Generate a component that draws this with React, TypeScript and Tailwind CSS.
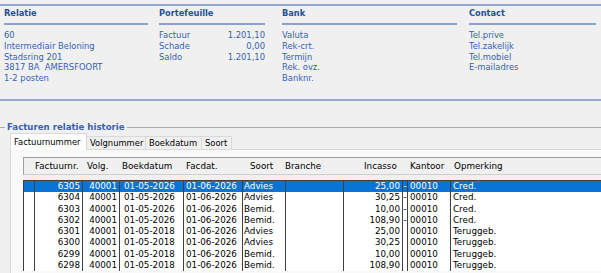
import React from 'react';

interface Invoice {
  nr: string;
  volg: string;
  boek: string;
  fac: string;
  soort: string;
  incasso: string;
  dash: string;
  kantoor: string;
  opm: string;
}

const rows: Invoice[] = [
  { nr: '6305', volg: '40001', boek: '01-05-2026', fac: '01-06-2026', soort: 'Advies', incasso: '25,00', dash: '-', kantoor: '00010', opm: 'Cred.' },
  { nr: '6304', volg: '40001', boek: '01-05-2026', fac: '01-06-2026', soort: 'Advies', incasso: '30,25', dash: '-', kantoor: '00010', opm: 'Cred.' },
  { nr: '6303', volg: '40001', boek: '01-05-2026', fac: '01-06-2026', soort: 'Bemid.', incasso: '10,00', dash: '-', kantoor: '00010', opm: 'Cred.' },
  { nr: '6302', volg: '40001', boek: '01-05-2026', fac: '01-06-2026', soort: 'Bemid.', incasso: '108,90', dash: '-', kantoor: '00010', opm: 'Cred.' },
  { nr: '6301', volg: '40001', boek: '01-05-2018', fac: '01-06-2026', soort: 'Advies', incasso: '25,00', dash: '', kantoor: '00010', opm: 'Teruggeb.' },
  { nr: '6300', volg: '40001', boek: '01-05-2018', fac: '01-06-2026', soort: 'Advies', incasso: '30,25', dash: '', kantoor: '00010', opm: 'Teruggeb.' },
  { nr: '6299', volg: '40001', boek: '01-05-2018', fac: '01-06-2026', soort: 'Bemid.', incasso: '10,00', dash: '', kantoor: '00010', opm: 'Teruggeb.' },
  { nr: '6298', volg: '40001', boek: '01-05-2018', fac: '01-06-2026', soort: 'Bemid.', incasso: '108,90', dash: '', kantoor: '00010', opm: 'Teruggeb.' },
];

const InfoColumn: React.FC<{ title: string; width: string; children: React.ReactNode }> = ({ title, width, children }) => (
  <div className={`${width} shrink-0`}>
    <div className="h-[11px] leading-[11px] text-[8.25px] font-bold text-[#24509c]">{title}</div>
    <div className="mt-[4px] h-[2px] bg-[#8ba1cb]" />
    <div className="mt-[5px] text-[8.4px] leading-[10.75px] text-[#3563b3]">{children}</div>
  </div>
);

const tabs = ['Factuurnummer', 'Volgnummer', 'Boekdatum', 'Soort'];

export default function App() {
  return (
    <div className="w-[601px] h-[273px] overflow-hidden bg-[#f0f0f0] font-['DejaVu_Sans',sans-serif]">
      {/* Relatie info */}
      <div className="pt-[4px]">
        <div className="h-[2px] bg-[#94a9cf]" />
        <div className="flex h-[93px] pt-[2px] pl-[4px]">
          <InfoColumn title="Relatie" width="w-[144px]">
            <div>60</div>
            <div>Intermediair Beloning</div>
            <div>Stadsring 201</div>
            <div className="whitespace-pre">3817 BA  AMERSFOORT</div>
            <div>1-2 posten</div>
          </InfoColumn>
          <div className="ml-[11px]">
            <InfoColumn title="Portefeuille" width="w-[106px]">
              {[
                ['Factuur', '1.201,10'],
                ['Schade', '0,00'],
                ['Saldo', '1.201,10'],
              ].map(([k, v]) => (
                <div key={k} className="flex justify-between">
                  <span>{k}</span>
                  <span>{v}</span>
                </div>
              ))}
            </InfoColumn>
          </div>
          <div className="ml-[17px]">
            <InfoColumn title="Bank" width="w-[175px]">
              <div>Valuta</div>
              <div>Rek-crt.</div>
              <div>Termijn</div>
              <div>Rek. ovz.</div>
              <div>Banknr.</div>
            </InfoColumn>
          </div>
          <div className="ml-[12px]">
            <InfoColumn title="Contact" width="w-[127px]">
              <div>Tel.prive</div>
              <div>Tel.zakelijk</div>
              <div>Tel.mobiel</div>
              <div>E-mailadres</div>
            </InfoColumn>
          </div>
        </div>
        <div className="h-[2px] bg-[#94a9cf]" />
      </div>

      {/* Group box */}
      <div className="mt-[21px] flex items-center h-[11px]">
        <div className="w-[5px] h-px bg-[#a9a9a9]" />
        <span className="px-[2px] text-[8.6px] leading-[11px] font-bold text-[#3a62ad]">Facturen relatie historie</span>
        <div className="flex-1 h-px bg-[#a9a9a9]" />
      </div>

      {/* Tabs */}
      <div className="flex items-end h-[16px] pl-[10px] text-[8.4px] text-black">
        {tabs.map((t, i) =>
          i === 0 ? (
            <div key={t} className="relative z-10 -mb-px h-[17px] w-[77px] bg-white border border-b-0 border-[#d9d9d9] pl-[3px] pt-[3px] leading-[11px]">
              {t}
            </div>
          ) : (
            <div
              key={t}
              className={`h-[13px] border border-b-0 border-l-0 border-[#d9d9d9] bg-[#f0f0f0] pl-[3px] leading-[12px] ${
                i === 1 ? 'w-[59px]' : i === 2 ? 'w-[56px]' : 'w-[30px]'
              }`}
            >
              {t}
            </div>
          )
        )}
      </div>

      {/* Tab panel */}
      <div className="ml-[10px] h-[200px] border-t border-l border-[#d9d9d9] bg-[#f9f9f9] pt-[7px] pl-[12px]">
        <div className="w-[700px] bg-[#f0f0f0] text-[8.75px] text-black">
          {/* Column header */}
          <div className="flex h-[18px] items-center border-t border-l border-[#a0a0a0] border-b border-b-[#cfcfcf] leading-[11px]">
            <span className="w-[11px] shrink-0" />
            <span className="w-[52px] shrink-0">Factuurnr.</span>
            <span className="w-[35px] shrink-0">Volg.</span>
            <span className="w-[64px] shrink-0">Boekdatum</span>
            <span className="w-[64px] shrink-0">Facdat.</span>
            <span className="w-[35px] shrink-0">Soort</span>
            <span className="w-[79px] shrink-0">Branche</span>
            <span className="w-[46px] shrink-0">Incasso</span>
            <span className="w-[44px] shrink-0">Kantoor</span>
            <span>Opmerking</span>
          </div>

          {/* Rows */}
          <div className="mt-[5px] border-t border-l border-[#404040] bg-white">
            {rows.map((r, i) => {
              const sel = i === 0;
              const cell = 'h-full shrink-0 border-r border-[#404040]';
              return (
                <div
                  key={r.nr}
                  className={`flex h-[11.25px] leading-[11.25px] whitespace-nowrap ${sel ? 'bg-[#0a74d6] text-white' : ''}`}
                >
                  <div className={`${cell} w-[11px]`} />
                  <div className={`${cell} w-[48px] pr-[2px] text-right`}>{r.nr}</div>
                  <div className={`${cell} w-[37px] pr-[2px] text-right`}>{r.volg}</div>
                  <div className={`${cell} w-[64px] pl-[4px]`}>{r.boek}</div>
                  <div className={`${cell} w-[59px] pl-[2px]`}>{r.fac}</div>
                  <div className={`${cell} w-[43px] pl-[1px]`}>{r.soort}</div>
                  <div className={`${cell} w-[58px]`} />
                  <div className={`${cell} w-[59px] pr-[2px] text-right`}>{r.incasso}</div>
                  <div className={`${cell} w-[5px] text-center leading-[10px]`}>{r.dash}</div>
                  <div className={`${cell} w-[43px] pl-[2px]`}>{r.kantoor}</div>
                  <div className="h-full flex-1 pl-[2px]">{r.opm}</div>
                </div>
              );
            })}
          </div>
        </div>
      </div>
    </div>
  );
}
